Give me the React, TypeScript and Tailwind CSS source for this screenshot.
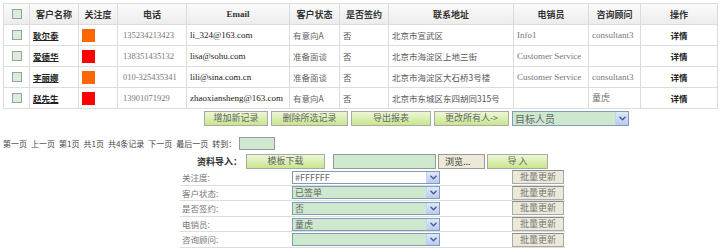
import React from 'react'

const rows = [
  { name: '耿尔泰', color: 'bg-[#ff6600]', phone: '135234213423', email: 'li_324@163.com', status: '有意向A', signed: '否', addr: '北京市宣武区', sales: 'Info1', consultant: 'consultant3' },
  { name: '爱德华', color: 'bg-[#ff0000]', phone: '138351435132', email: 'lisa@sohu.com', status: '准备面谈', signed: '否', addr: '北京市海淀区上地三街', sales: 'Customer Service', consultant: '' },
  { name: '李丽娜', color: 'bg-[#ff6600]', phone: '010-325435341', email: 'lili@sina.com.cn', status: '准备面谈', signed: '否', addr: '北京市海淀区大石桥3号楼', sales: 'Customer Service', consultant: 'consultant3' },
  { name: '赵先生', color: 'bg-[#ff0000]', phone: '13901071929', email: 'zhaoxiansheng@163.com', status: '有意向A', signed: '否', addr: '北京市东城区东四胡同315号', sales: '', consultant: '童虎' },
]

const cjk = "font-['Noto_Sans_CJK_SC',sans-serif]"
const serif = "font-['Liberation_Serif','Noto_Sans_CJK_SC',serif]"

function Box() {
  return <span className="inline-block w-[10px] h-[10px] border border-[#8fa88f] bg-[#dfe9df] align-middle" />
}

function GreenBtn({ w, children }: { w: string; children: React.ReactNode }) {
  return (
    <div className={`${w} h-[15px] border border-[#a9a9a9] bg-gradient-to-b from-[#eef7d8] to-[#c7e68a] text-[#666] text-[9px] leading-[11px] text-center overflow-hidden whitespace-nowrap`}>
      {children}
    </div>
  )
}

function GrayBtn({ w, children }: { w: string; children: React.ReactNode }) {
  return (
    <div className={`${w} h-[14px] border border-[#a9a9a9] border-t-[#8c8c8c] bg-[#ece9d8] text-[#777] text-[9px] leading-[12px] text-center overflow-hidden whitespace-nowrap`}>
      {children}
    </div>
  )
}

function Arrow() {
  return (
    <div className="w-[13px] h-full bg-gradient-to-b from-[#dfe8fb] to-[#b8cbf3] flex items-center justify-center border-l border-[#c3d3f7]">
      <svg width="7" height="5" viewBox="0 0 7 5">
        <path d="M0.5 0.8 L3.5 3.8 L6.5 0.8" stroke="#4d6185" strokeWidth="1.4" fill="none" />
      </svg>
    </div>
  )
}

function Select({ w, value, bg }: { w: string; value: string; bg: string }) {
  return (
    <div className={`${w} h-[13px] border border-[#7f9db9] flex bg-white`}>
      <div className={`flex-1 ${bg} text-[#666] text-[9px] leading-[11px] pl-[2px] overflow-hidden whitespace-nowrap`}>{value}</div>
      <Arrow />
    </div>
  )
}

export default function App() {
  const th = `border border-[#dcdcdc] h-[21px] p-0 font-bold text-[#333] text-[9px] leading-none text-center`
  const td = `border border-[#dcdcdc] h-[21px] py-0 px-[3px] text-[8.5px] leading-none`
  return (
    <div className={`w-[727px] h-[252px] bg-white overflow-hidden ${cjk}`}>
      <table className="ml-[3px] mt-[3px] border-collapse table-fixed w-[715px]">
        <thead>
          <tr className="bg-gradient-to-b from-[#fbfbfb] to-[#ececec]">
            <th className={`${th} w-[26px]`}><Box /></th>
            <th className={`${th} w-[49px]`}>客户名称</th>
            <th className={`${th} w-[39px]`}>关注度</th>
            <th className={`${th} w-[69px]`}>电话</th>
            <th className={`${th} w-[103px] ${serif}`}>Email</th>
            <th className={`${th} w-[50px]`}>客户状态</th>
            <th className={`${th} w-[49px]`}>是否签约</th>
            <th className={`${th} w-[125px]`}>联系地址</th>
            <th className={`${th} w-[75px]`}>电销员</th>
            <th className={`${th} w-[52px]`}>咨询顾问</th>
            <th className={`${th} w-[77px]`}>操作</th>
          </tr>
        </thead>
        <tbody>
          {rows.map((r) => (
            <tr key={r.name}>
              <td className={`${td} text-center`}><Box /></td>
              <td className={`${td} text-[#222] font-bold underline`}>{r.name}</td>
              <td className={`${td}`}><span className={`block w-[13px] h-[13px] ${r.color}`} /></td>
              <td className={`${td} pl-[5px] text-[#777] text-[8.5px] ${serif}`}>{r.phone}</td>
              <td className={`${td} text-[#222] text-[9px] ${serif} whitespace-nowrap overflow-hidden`}>{r.email}</td>
              <td className={`${td} text-[#666]`}>{r.status}</td>
              <td className={`${td} text-[#555]`}>{r.signed}</td>
              <td className={`${td} text-[#555] whitespace-nowrap overflow-hidden`}>{r.addr}</td>
              <td className={`${td} text-[#777] text-[9px] ${serif} whitespace-nowrap`}>{r.sales}</td>
              <td className={`${td} text-[#777] text-[9px] ${serif}`}>{r.consultant}</td>
              <td className={`${td} text-center font-bold text-[#222]`}>详情</td>
            </tr>
          ))}
        </tbody>
      </table>

      <div className="flex items-center gap-[3px] pl-[204px] mt-[2px]">
        <GreenBtn w="w-[64px]">增加新记录</GreenBtn>
        <GreenBtn w="w-[77px]">删除所选记录</GreenBtn>
        <GreenBtn w="w-[80px]">导出报表</GreenBtn>
        <GreenBtn w="w-[75px]">更改所有人-&gt;</GreenBtn>
        <div className="w-[117px] h-[15px] border border-[#7f9db9] flex bg-white">
          <div className="flex-1 bg-[#cde8cd] text-[#666] text-[10px] leading-[13px] pl-[2px]">目标人员</div>
          <Arrow />
        </div>
      </div>

      <div className="flex items-center mt-[11px] pl-[3px] text-[8px] leading-none text-[#444] h-[13px]">
        <span className="flex gap-[4px] whitespace-nowrap">
          <span>第一页</span><span>上一页</span><span>第1页</span><span>共1页</span><span>共4条记录</span><span>下一页</span><span>最后一页</span><span>转到：</span>
        </span>
        <div className="ml-[3px] w-[36px] h-[13px] border border-[#999] bg-[#cfe8d0]" />
      </div>

      <div className="flex items-center mt-[4px] h-[15px]">
        <span className="ml-[197px] w-[47px] text-[9px] font-bold text-[#333] whitespace-nowrap">资料导入：</span>
        <div className="ml-[2px]"><GreenBtn w="w-[79px]">模板下载</GreenBtn></div>
        <div className="ml-[8px] w-[103px] h-[15px] border border-[#999] bg-[#cfe8d0]" />
        <div className="ml-[2px] w-[47px] h-[15px] border border-[#999] bg-[#ece9d8] text-[9px] text-[#333] leading-[13px] pl-[6px]">浏览...</div>
        <div className="ml-[2px]"><GreenBtn w="w-[61px]">导 入</GreenBtn></div>
      </div>

      <div className="ml-[180px] w-[385px] mt-[1px]">
        {[
          { l: '关注度:', v: '#FFFFFF', bg: 'bg-white' },
          { l: '客户状态:', v: '已签单', bg: 'bg-[#cde8cd]' },
          { l: '是否签约:', v: '否', bg: 'bg-[#cde8cd]' },
          { l: '电销员:', v: '童虎', bg: 'bg-[#cde8cd]' },
          { l: '咨询顾问:', v: '', bg: 'bg-[#cde8cd]' },
        ].map((f) => (
          <div key={f.l} className="flex items-center h-[15.6px] border-b border-[#dddddd]">
            <span className="w-[112px] pl-[2px] text-[8.5px] leading-none text-[#777]">{f.l}</span>
            <Select w="w-[148px]" value={f.v} bg={f.bg} />
            <div className="ml-[72px]"><GrayBtn w="w-[52px]">批量更新</GrayBtn></div>
          </div>
        ))}
      </div>
    </div>
  )
}
